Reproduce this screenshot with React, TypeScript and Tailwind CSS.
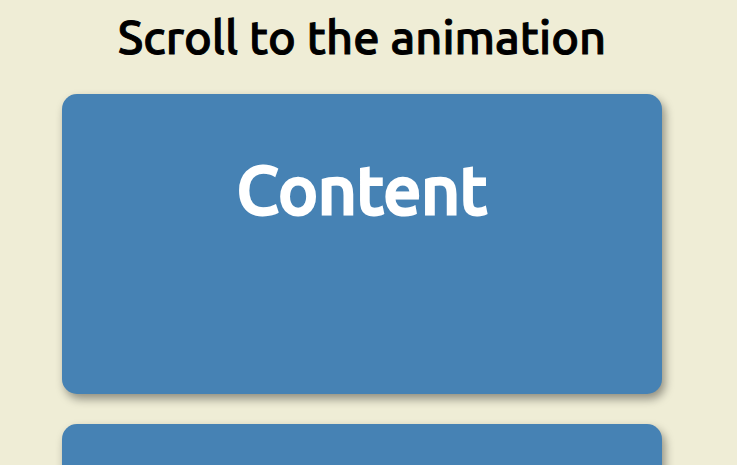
export default function App() {
  const boxes = [{ id: 1, label: "Content" }, { id: 2, label: "" }];
  return (
    <main className="flex h-screen flex-col items-center overflow-hidden bg-[#efedd6] pr-[13px] font-[Ubuntu,'Noto_Sans',sans-serif]">
      <h1 className="mt-2 mb-1.5 text-center text-[47px] leading-[58px] font-medium text-black [-webkit-text-stroke:1px_currentColor]">
        Scroll to the animation
      </h1>
      {boxes.map(({ id, label }) => (
        <section
          key={id}
          className="mt-[22px] mb-2 flex h-[300px] w-[600px] max-w-full shrink-0 items-start justify-center rounded-[15px] bg-[#4682b4] pt-[60px] text-white shadow-[3px_5px_10px_rgba(0,0,0,0.4)]"
        >
          {label && (
            <h2 className="text-[67px] leading-[72px] font-medium [-webkit-text-stroke:3px_currentColor]">{label}</h2>
          )}
        </section>
      ))}
    </main>
  );
}
